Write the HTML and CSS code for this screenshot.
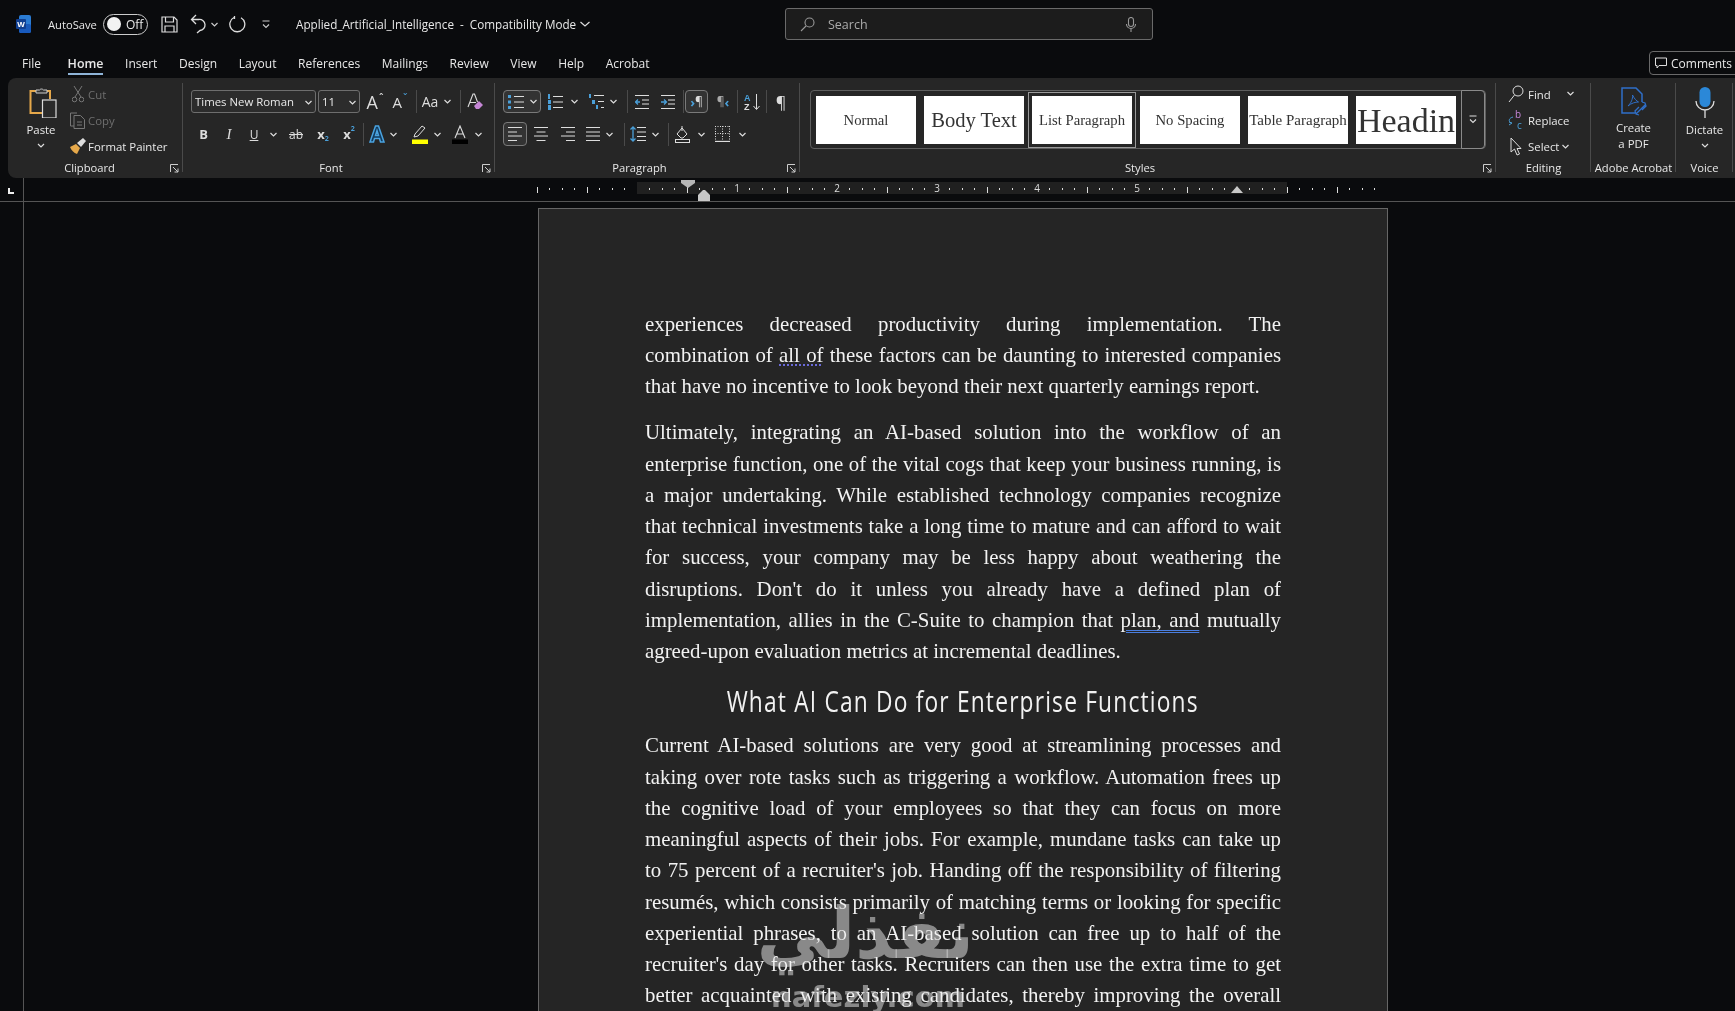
FILE: index.html
```html
<!DOCTYPE html>
<html lang="en">
<head>
    <meta charset="UTF-8">
    <title>Applied_Artificial_Intelligence - Compatibility Mode</title>
    <link rel="stylesheet" href="styles.css">
</head>
<body>
    <header class="titlebar">
        <svg class="word-logo" width="16" height="18" viewBox="0 0 16 18"><rect x="3" y="0" width="12" height="18" rx="2" fill="#2b7cd3"/><rect x="3" y="9" width="12" height="9" rx="2" fill="#185abd"/><rect x="0" y="4" width="10" height="10" rx="1" fill="#103f91"/><text x="5" y="12" font-size="8" font-weight="700" fill="#fff" text-anchor="middle" font-family="Liberation Sans">W</text></svg>
        <span class="autosave">AutoSave</span>
        <span class="toggle"><i class="knob"></i>Off</span>
        <svg class="qa save" width="17" height="17" viewBox="0 0 17 17" fill="none" stroke="#ddd" stroke-width="1.2"><path d="M1 1h12l3 3v12H1z"/><path d="M4.5 1v5h8V1M4 16v-6h9v6"/></svg>
        <svg class="qa undo" width="16" height="20" viewBox="0 0 16 20" fill="none" stroke="#ddd" stroke-width="1.3"><path d="M6 1L1.5 5.5 6 10M2 5.5h7a5.5 5.5 0 0 1 1 11L7 19"/></svg>
        <svg class="qa chev-undo" width="7" height="5" viewBox="0 0 7 5" fill="none" stroke="#ccc" stroke-width="1.2"><path d="M.5 1l3 3 3-3"/></svg>
        <svg class="qa redo" width="17" height="18" viewBox="0 0 17 18" fill="none" stroke="#ddd" stroke-width="1.3"><path d="M5 2.5a7.5 7.5 0 1 0 7 .2M5.5 1v3"/></svg>
        <svg class="qa custom" width="8" height="9" viewBox="0 0 8 9" fill="none" stroke="#ccc" stroke-width="1.1"><path d="M.5 1h7M1 4.5l3 3 3-3"/></svg>
        <span class="doc-title">Applied_Artificial_Intelligence &nbsp;-&nbsp; Compatibility Mode</span>
        <svg class="title-chev" width="10" height="6" viewBox="0 0 10 6" fill="none" stroke="#ddd" stroke-width="1.2"><path d="M.5 1l4.5 4 4.5-4"/></svg>
        <div class="search">
            <svg width="15" height="15" viewBox="0 0 15 15" fill="none" stroke="#999" stroke-width="1.1"><circle cx="9.5" cy="5.5" r="4.5"/><path d="M6 9l-5 5"/></svg>
            <span class="search-text">Search</span>
            <svg class="search-mic" width="10" height="15" viewBox="0 0 10 15" fill="none" stroke="#999" stroke-width="1.1"><rect x="2.5" y=".5" width="5" height="9" rx="2.5"/><path d="M.5 7a4.5 4.5 0 0 0 9 0M5 11.5V15"/></svg>
        </div>
    </header>

    <nav class="tabs">
        <span class="tab tab-file">File</span>
        <span class="tab active">Home</span>
        <span class="tab">Insert</span>
        <span class="tab">Design</span>
        <span class="tab">Layout</span>
        <span class="tab">References</span>
        <span class="tab">Mailings</span>
        <span class="tab">Review</span>
        <span class="tab">View</span>
        <span class="tab">Help</span>
        <span class="tab">Acrobat</span>
        <span class="comments">
            <svg width="12" height="12" viewBox="0 0 12 12" fill="none" stroke="#ddd" stroke-width="1"><path d="M.5 1h11v7.5H4L2 11V8.5H.5z"/></svg>
            Comments
        </span>
    </nav>

    <section class="ribbon">
        <div class="group g-clipboard">
            <div class="group-body">
                <div class="big-btn paste">
                    <svg class="paste-ic" width="28" height="31" viewBox="0 0 28 31" fill="none"><path d="M8 4H1.5v22H13" stroke="#e6a84a" stroke-width="2"/><path d="M18 4h3v8" stroke="#e6a84a" stroke-width="2"/><path d="M7 6V3h3.5a2.5 2.5 0 0 1 4 0H18v3z" stroke="#ccc" fill="#333"/><rect x="13.5" y="13" width="13.5" height="18" fill="#2a2a2a" stroke="#ddd" stroke-width="1.2"/></svg>
                    <span class="big-label">Paste</span>
                    <svg class="big-chev" width="8" height="5" viewBox="0 0 8 5" fill="none" stroke="#ddd" stroke-width="1.2"><path d="M1 1l3 3 3-3"/></svg>
                </div>
                <div class="small-col clip-col">
                    <div class="small-row disabled"><span class="small-ic"><svg width="12" height="18" viewBox="0 0 12 18" fill="none" stroke="#777"><path d="M2 1l7 11M10 1L3 12"/><circle cx="2.5" cy="14.5" r="2.3"/><circle cx="9.5" cy="14.5" r="2.3"/></svg></span>Cut</div>
                    <div class="small-row disabled"><span class="small-ic"><svg width="15" height="17" viewBox="0 0 15 17" fill="none" stroke="#777"><path d="M4 14H.5V1H7"/><path d="M4 3.5h6.5l4 4v9H4zM7 10h5M7 13h5"/></svg></span>Copy</div>
                    <div class="small-row"><span class="small-ic"><svg width="16" height="16" viewBox="0 0 16 16"><path d="M0 9l6-3 4 4-3 6C4 15 1 12 0 9z" fill="#e6a84a"/><path d="M7 5l6-5 3 3-5 6z" fill="#ddd"/></svg></span>Format Painter</div>
                </div>
            </div>
            <div class="group-label">Clipboard</div>
            <svg class="launcher" width="9" height="9" viewBox="0 0 9 9" fill="none" stroke="#ccc"><path d="M.5 8V.5H8M3 3l5 5M8 4.5V8H4.5"/></svg>
        </div>

        <div class="group g-font">
            <div class="group-body rows">
                <div class="row row-top">
                    <div class="combo w125">Times New Roman<svg class="combo-chev" width="7" height="5" viewBox="0 0 7 5" fill="none" stroke="#ddd" stroke-width="1.2"><path d="M.5 1l3 3 3-3"/></svg></div>
                    <div class="combo w42 ml2">11<svg class="combo-chev" width="7" height="5" viewBox="0 0 7 5" fill="none" stroke="#ddd" stroke-width="1.2"><path d="M.5 1l3 3 3-3"/></svg></div>
                    <span class="s w30"><span class="glyph big-a">A</span><span class="caret">ˆ</span></span>
                    <span class="s w20"><span class="glyph mid-a">A</span><span class="caret blue">ˇ</span></span>
                    <span class="s w6"></span><i class="sep"></i>
                    <span class="s w26"><span class="glyph aa">Aa</span></span>
                    <span class="s w8"><svg width="7" height="5" viewBox="0 0 7 5" fill="none" stroke="#ddd" stroke-width="1.2"><path d="M.5 1l3 3 3-3"/></svg></span>
                    <span class="s w9"></span><i class="sep"></i>
                    <span class="s w28"><svg width="17" height="18" viewBox="0 0 17 18" fill="none"><path d="M1 14L6 1h1.5l3 8M3 9.5h6" stroke="#ddd" stroke-width="1.1"/><path d="M7 13l5-5 4 4-4 4H9z" fill="#c586d6"/></svg></span>
                </div>
                <div class="row">
                    <span class="s w25 glyph bold">B</span>
                    <span class="s w26 glyph ital">I</span>
                    <span class="s w24 glyph und">U</span>
                    <span class="s w15"><svg width="7" height="5" viewBox="0 0 7 5" fill="none" stroke="#ddd" stroke-width="1.2"><path d="M.5 1l3 3 3-3"/></svg></span>
                    <span class="s w30 glyph strike">ab</span>
                    <span class="s w24 glyph bold">x<span class="sub blue">2</span></span>
                    <span class="s w28 glyph bold">x<span class="sup blue">2</span></span>
                    <i class="sep"></i>
                    <span class="s w25"><svg width="16" height="18" viewBox="0 0 16 18" fill="#123a5c" stroke="#4aa3e0" stroke-width="1.5"><path d="M1 17L6.5 1h3L15 17h-3.5l-1-3.5h-5L4.5 17zM6.5 10.5h3L8 5.5z"/></svg></span>
                    <span class="s w8"><svg width="7" height="5" viewBox="0 0 7 5" fill="none" stroke="#ddd" stroke-width="1.2"><path d="M.5 1l3 3 3-3"/></svg></span>
                    <span class="s w12"></span>
                    <span class="s w22"><svg width="16" height="19" viewBox="0 0 16 19"><path d="M2 12l1-3 7-8 3 2-7 8z" fill="none" stroke="#ddd"/><rect y="14.5" width="16" height="4.5" fill="#ffff00"/></svg></span>
                    <span class="s w12"><svg width="7" height="5" viewBox="0 0 7 5" fill="none" stroke="#ddd" stroke-width="1.2"><path d="M.5 1l3 3 3-3"/></svg></span>
                    <span class="s w6"></span>
                    <span class="s w22"><svg width="16" height="19" viewBox="0 0 16 19"><path d="M3 13L8 1l5 12M4.7 9h6.6" fill="none" stroke="#ddd" stroke-width="1.1"/><rect y="14.5" width="16" height="4.5" fill="#000"/></svg></span>
                    <span class="s w14"><svg width="7" height="5" viewBox="0 0 7 5" fill="none" stroke="#ddd" stroke-width="1.2"><path d="M.5 1l3 3 3-3"/></svg></span>
                </div>
            </div>
            <div class="group-label">Font</div>
            <svg class="launcher" width="9" height="9" viewBox="0 0 9 9" fill="none" stroke="#ccc"><path d="M.5 8V.5H8M3 3l5 5M8 4.5V8H4.5"/></svg>
        </div>

        <div class="group g-paragraph">
            <div class="group-body rows">
                <div class="row row-top">
                    <span class="s w38 pressed"><svg width="16" height="16" viewBox="0 0 16 16"><path d="M6 2.5h10M6 8h10M6 13.5h10" stroke="#ddd"/><path d="M0 1h3v3H0zM0 6.5h3v3H0zM0 12h3v3H0z" fill="#4a9fd8"/></svg><svg class="ml6" width="7" height="5" viewBox="0 0 7 5" fill="none" stroke="#ddd" stroke-width="1.2"><path d="M.5 1l3 3 3-3"/></svg></span>
                    <span class="s w7"></span>
                    <span class="s w15"><svg width="15" height="16" viewBox="0 0 15 16"><path d="M5 2.5h10M5 8h10M5 13.5h10" stroke="#ddd"/><path d="M0 0h2v5H0zM0 6h3v4H0zM0 11h3v5H0z" fill="#4a9fd8"/></svg></span>
                    <span class="s w22"><svg width="7" height="5" viewBox="0 0 7 5" fill="none" stroke="#ddd" stroke-width="1.2"><path d="M.5 1l3 3 3-3"/></svg></span>
                    <span class="s w4"></span>
                    <span class="s w15"><svg width="15" height="16" viewBox="0 0 15 16"><path d="M5 1.5h10M9 7.5h6M12 13.5h3" stroke="#ddd"/><path d="M0 0h2v4H0zM3 6h3v4H3zM7 11h2v4H7z" fill="#4a9fd8"/></svg></span>
                    <span class="s w18"><svg width="7" height="5" viewBox="0 0 7 5" fill="none" stroke="#ddd" stroke-width="1.2"><path d="M.5 1l3 3 3-3"/></svg></span>
                    <span class="s w5"></span><i class="sep"></i>
                    <span class="s w7"></span>
                    <span class="s w14"><svg width="14" height="14" viewBox="0 0 14 14" fill="none"><path d="M0 .5h14M7 5h7M7 9h7M0 13.5h14" stroke="#ddd"/><path d="M5 7H.5M3 4.5L.5 7 3 9.5" stroke="#4a9fd8" stroke-width="1.3"/></svg></span>
                    <span class="s w12"></span>
                    <span class="s w14"><svg width="14" height="14" viewBox="0 0 14 14" fill="none"><path d="M0 .5h14M7 5h7M7 9h7M0 13.5h14" stroke="#ddd"/><path d="M0 7h5M3 4.5L5.5 7 3 9.5" stroke="#4a9fd8" stroke-width="1.3"/></svg></span>
                    <span class="s w8"></span><i class="sep"></i>
                    <span class="s w1"></span>
                    <span class="s w23 pressed"><span class="blue arrow">›</span><span class="glyph pil">¶</span></span>
                    <span class="s w9"></span>
                    <span class="s w12"><span class="glyph pil dim">¶</span><span class="blue arrow">‹</span></span>
                    <span class="s w8"></span><i class="sep"></i>
                    <span class="s w6"></span>
                    <span class="s w16"><svg width="16" height="18" viewBox="0 0 16 18" fill="none"><text x="0" y="8" font-size="9" font-weight="700" fill="#4a9fd8" font-family="Liberation Sans">A</text><text x="0" y="17" font-size="9" font-weight="700" fill="#ddd" font-family="Liberation Sans">Z</text><path d="M12.5 1v15M9.5 13l3 3.5 3-3.5" stroke="#ddd"/></svg></span>
                    <span class="s w6"></span><i class="sep"></i>
                    <span class="s w28 glyph pilcrow">¶</span>
                </div>
                <div class="row">
                    <span class="s w24 pressed"><svg width="14" height="14" viewBox="0 0 14 14" stroke="#ddd"><path d="M0 .5h14M0 5h9M0 9h14M0 13.5h9"/></svg></span>
                    <span class="s w28"><svg width="14" height="14" viewBox="0 0 14 14" stroke="#ddd"><path d="M0 .5h14M2.5 5h9M0 9h14M2.5 13.5h9"/></svg></span>
                    <span class="s w26"><svg width="14" height="14" viewBox="0 0 14 14" stroke="#ddd"><path d="M0 .5h14M5 5h9M0 9h14M5 13.5h9"/></svg></span>
                    <span class="s w24"><svg width="14" height="14" viewBox="0 0 14 14" stroke="#ddd"><path d="M0 .5h14M0 5h14M0 9h14M0 13.5h14"/></svg></span>
                    <span class="s w8"><svg width="7" height="5" viewBox="0 0 7 5" fill="none" stroke="#ddd" stroke-width="1.2"><path d="M.5 1l3 3 3-3"/></svg></span>
                    <span class="s w11"></span><i class="sep"></i>
                    <span class="s w26"><svg width="16" height="16" viewBox="0 0 16 16" fill="none"><path d="M7 1.5h9M7 6h9M7 10.5h9M7 14.5h9" stroke="#ddd"/><path d="M3 1v14M.5 3.5L3 1l2.5 2.5M.5 12.5L3 15l2.5-2.5" stroke="#4a9fd8" stroke-width="1.3"/></svg></span>
                    <span class="s w8"><svg width="7" height="5" viewBox="0 0 7 5" fill="none" stroke="#ddd" stroke-width="1.2"><path d="M.5 1l3 3 3-3"/></svg></span>
                    <span class="s w9"></span><i class="sep"></i>
                    <span class="s w26"><svg width="15" height="18" viewBox="0 0 15 18" fill="none" stroke="#ddd"><path d="M2 9l5-6 5 6-4 4H6zM7 1v5"/><rect x=".5" y="14.5" width="14" height="3"/></svg></span>
                    <span class="s w12"><svg width="7" height="5" viewBox="0 0 7 5" fill="none" stroke="#ddd" stroke-width="1.2"><path d="M.5 1l3 3 3-3"/></svg></span>
                    <span class="s w31"><svg width="15" height="16" viewBox="0 0 15 16" fill="none" stroke="#ddd"><path d="M0 15.5h15" stroke-width="1.3"/><path d="M.5 0v15M14.5 0v15M7.5 0v15M0 .5h15M0 7.5h15" stroke-dasharray="1 1.5"/></svg></span>
                    <span class="s w8"><svg width="7" height="5" viewBox="0 0 7 5" fill="none" stroke="#ddd" stroke-width="1.2"><path d="M.5 1l3 3 3-3"/></svg></span>
                </div>
            </div>
            <div class="group-label">Paragraph</div>
            <svg class="launcher" width="9" height="9" viewBox="0 0 9 9" fill="none" stroke="#ccc"><path d="M.5 8V.5H8M3 3l5 5M8 4.5V8H4.5"/></svg>
        </div>

        <div class="group g-styles">
            <div class="group-body">
                <div class="gallery">
                    <div class="style-cell st-normal">Normal</div>
                    <div class="style-cell st-body">Body Text</div>
                    <div class="style-cell st-normal selected">List Paragraph</div>
                    <div class="style-cell st-normal">No Spacing</div>
                    <div class="style-cell st-table">Table Paragraph</div>
                    <div class="style-cell st-head">Headin</div>
                    <div class="gallery-more"><svg width="8" height="9" viewBox="0 0 8 9" fill="none" stroke="#ddd" stroke-width="1.1"><path d="M.5 1h7M1 4.5l3 3 3-3"/></svg></div>
                </div>
            </div>
            <div class="group-label">Styles</div>
            <svg class="launcher" width="9" height="9" viewBox="0 0 9 9" fill="none" stroke="#ccc"><path d="M.5 8V.5H8M3 3l5 5M8 4.5V8H4.5"/></svg>
        </div>

        <div class="group g-editing">
            <div class="group-body">
                <div class="small-col">
                    <div class="small-row"><span class="small-ic wide"><svg width="16" height="18" viewBox="0 0 16 18" fill="none" stroke="#ddd"><circle cx="10" cy="6" r="5"/><path d="M6.5 10L1 17"/></svg></span>Find<svg class="find-chev" width="7" height="5" viewBox="0 0 7 5" fill="none" stroke="#ddd" stroke-width="1.2"><path d="M.5 1l3 3 3-3"/></svg></div>
                    <div class="small-row"><span class="small-ic wide"><svg width="16" height="20" viewBox="0 0 16 20" fill="none"><text x="7" y="8" font-size="10" fill="#c586d6" font-family="Open Sans">b</text><text x="9" y="19" font-size="10" fill="#4a9fd8" font-family="Open Sans">c</text><path d="M5 7C1 8 0 11 3 13M1 15l3-2-3-1" stroke="#4a9fd8"/></svg></span>Replace</div>
                    <div class="small-row"><span class="small-ic wide"><svg width="12" height="19" viewBox="0 0 12 19" fill="none" stroke="#ddd"><path d="M1 1v14l3.5-3 2.5 6 2.5-1-2.5-5.5H11z"/></svg></span>Select<svg class="sel-chev" width="7" height="5" viewBox="0 0 7 5" fill="none" stroke="#ddd" stroke-width="1.2"><path d="M.5 1l3 3 3-3"/></svg></div>
                </div>
            </div>
            <div class="group-label nolaunch">Editing</div>
        </div>

        <div class="group g-acrobat">
            <div class="group-body">
                <div class="big-btn">
                    <svg width="26" height="30" viewBox="0 0 26 30" fill="none" stroke="#2f6fc9" stroke-width="1.5"><path d="M14 26H1V1h14l6 6v8"/><path d="M7 19c3-3 5-7 4.5-11 2 4 4 6 6 7-3 0-7 1-10.5 4z" stroke-width="1"/><path d="M15 27l9-9M18 28l-3-1-1-3 4-4M21 15l3 1 1 3-4 4" stroke-width="1.3"/></svg>
                    <span class="big-label acro-1">Create</span>
                    <span class="big-label acro-2">a PDF</span>
                </div>
            </div>
            <div class="group-label nolaunch">Adobe Acrobat</div>
        </div>

        <div class="group g-voice">
            <div class="group-body">
                <div class="big-btn">
                    <svg width="20" height="31" viewBox="0 0 20 31" fill="none"><rect x="4.5" y="0" width="11" height="20" rx="5.5" fill="#2b88d8"/><path d="M1 14a9 9 0 0 0 18 0M10 23v8" stroke="#ddd" stroke-width="1.3"/></svg>
                    <span class="big-label">Dictate</span>
                    <svg class="big-chev" width="8" height="5" viewBox="0 0 8 5" fill="none" stroke="#ddd" stroke-width="1.2"><path d="M1 1l3 3 3-3"/></svg>
                </div>
            </div>
            <div class="group-label nolaunch">Voice</div>
        </div>
    </section>

    <div class="ruler-row">
        <div class="corner"><i class="tab-stop"></i></div>
        <svg class="ruler" width="860" height="24" viewBox="0 0 860 24">
            <defs>
                <pattern id="ticks-outer" x="7" y="0" width="100" height="24" patternUnits="userSpaceOnUse">
                    <rect x="0" y="9" width="1" height="6" fill="#ddd"/><rect x="50" y="9" width="1" height="6" fill="#ddd"/>
                    <rect x="12" y="10" width="1" height="2" fill="#ddd"/><rect x="25" y="10" width="1" height="2" fill="#ddd"/><rect x="37" y="10" width="1" height="2" fill="#ddd"/>
                    <rect x="62" y="10" width="1" height="2" fill="#ddd"/><rect x="75" y="10" width="1" height="2" fill="#ddd"/><rect x="87" y="10" width="1" height="2" fill="#ddd"/>
                </pattern>
                <pattern id="ticks-inner" x="7" y="0" width="100" height="24" patternUnits="userSpaceOnUse">
                    <rect x="50" y="9" width="1" height="6" fill="#ddd"/>
                    <rect x="12" y="10" width="1" height="2" fill="#ddd"/><rect x="25" y="10" width="1" height="2" fill="#ddd"/><rect x="37" y="10" width="1" height="2" fill="#ddd"/>
                    <rect x="62" y="10" width="1" height="2" fill="#ddd"/><rect x="75" y="10" width="1" height="2" fill="#ddd"/><rect x="87" y="10" width="1" height="2" fill="#ddd"/>
                </pattern>
            </defs>
            <rect x="107" y="4" width="650" height="12" fill="#202020"/>
            <rect x="7" y="0" width="100" height="24" fill="url(#ticks-outer)"/>
            <rect x="107" y="0" width="650" height="24" fill="url(#ticks-inner)"/>
            <rect x="757" y="0" width="91" height="24" fill="url(#ticks-outer)"/>
            <g class="ruler-num">
                <text x="207" y="14" text-anchor="middle">1</text>
                <text x="307" y="14" text-anchor="middle">2</text>
                <text x="407" y="14" text-anchor="middle">3</text>
                <text x="507" y="14" text-anchor="middle">4</text>
                <text x="607" y="14" text-anchor="middle">5</text>
            </g>
            <path d="M151 2h14v3l-7 5-7-5z" fill="#b5b5b5"/>
            <path d="M168 17l5-5h2l5 5v6h-12z" fill="#c8c8c8"/>
            <path d="M701 15l6-7 6 7z" fill="#c8c8c8"/>
        </svg>
    </div>

    <main class="doc">
        <div class="vruler"></div>
        <div class="canvas">
            <article class="page">
                <p>experiences decreased productivity during implementation. The combination of <span class="dotted">all of</span> these factors can be daunting to interested companies that have no incentive to look beyond their next quarterly earnings report.</p>
                <p>Ultimately, integrating an AI-based solution into the workflow of an enterprise function, one of the vital cogs that keep your business running, is a major undertaking. While established technology companies recognize that technical investments take a long time to mature and can afford to wait for success, your company may be less happy about weathering the disruptions. Don't do it unless you already have a defined plan of implementation, allies in the C-Suite to champion that <span class="double">plan, and</span> mutually agreed-upon evaluation metrics at incremental deadlines.</p>
                <h2><span class="h2-text">What AI Can Do for Enterprise Functions</span></h2>
                <p>Current AI-based solutions are very good at streamlining processes and taking over rote tasks such as triggering a workflow. Automation frees up the cognitive load of your employees so that they can focus on more meaningful aspects of their jobs. For example, mundane tasks can take up to&nbsp;75 percent of a recruiter's job. Handing off the responsibility of filtering resumés, which consists primarily of matching terms or looking for specific experiential phrases, to an AI-based solution can free up to half of the recruiter's day for other tasks. Recruiters can then use the extra time to get better acquainted with existing candidates, thereby improving the overall candidate experience.</p>
                <div class="watermark">
                    <div class="wm-ar" lang="ar" dir="rtl">نفذلي</div>
                    <div class="wm-en">nafezly.com</div>
                </div>
            </article>
        </div>
    </main>
</body>
</html>
```

FILE: styles.css
```css
* {
    box-sizing: border-box;
}

html, body {
    margin: 0;
    height: 1011px;
    overflow: hidden;
}

body {
    background: #0a0b0d;
    color: #e8e8e8;
    font-family: "Open Sans", sans-serif;
    font-size: 12px;
    display: flex;
    flex-direction: column;
}

i {
    display: block;
}

.blue {
    color: #4a9fd8;
}

/* title bar */
.titlebar {
    height: 48px;
    display: flex;
    align-items: center;
    flex: none;
    padding-left: 16px;
}

.autosave {
    margin-left: 16px;
    width: 55px;
    font-size: 11.2px;
}

.toggle {
    width: 45px;
    height: 21px;
    border: 1px solid #ccc;
    border-radius: 11px;
    display: flex;
    align-items: center;
    gap: 5px;
    padding-left: 3px;
    font-size: 12px;
}

.knob {
    width: 14px;
    height: 14px;
    border-radius: 50%;
    background: #f2f2f2;
}

.qa {
    flex: none;
}

.save {
    margin-left: 13px;
}

.undo {
    margin-left: 12px;
}

.chev-undo {
    margin-left: 5px;
}

.redo {
    margin-left: 11px;
}

.custom {
    margin-left: 16px;
}

.doc-title {
    margin-left: 26px;
    width: 284px;
    white-space: nowrap;
    font-size: 11.7px;
}

.search {
    margin-left: 195px;
    width: 368px;
    height: 32px;
    border: 1px solid #6a6a6a;
    border-radius: 3px;
    background: #1c1c1c;
    display: flex;
    align-items: center;
    padding-left: 14px;
}

.search-text {
    margin-left: 13px;
    color: #aaa;
    font-size: 12.5px;
}

.search-mic {
    margin-left: auto;
    margin-right: 16px;
}

/* tabs */
.tabs {
    height: 30px;
    display: flex;
    align-items: center;
    gap: 21.6px;
    padding-left: 22px;
    flex: none;
    position: relative;
}

.tab {
    height: 30px;
    line-height: 32px;
    white-space: nowrap;
    font-size: 12px;
}

.tab-file {
    margin-right: 5px;
}

.active {
    font-weight: 600;
    font-size: 12.4px;
    position: relative;
}

.active::after {
    content: "";
    position: absolute;
    left: 0;
    right: 0;
    bottom: 3px;
    height: 2px;
    background: #8fb4d8;
}

.comments {
    position: absolute;
    left: 1649px;
    top: 3px;
    width: 100px;
    height: 24px;
    border: 1px solid #6a6a6a;
    border-radius: 4px;
    display: flex;
    align-items: center;
    gap: 4px;
    padding-left: 5px;
    white-space: nowrap;
}

/* ribbon */
.ribbon {
    height: 100px;
    margin-left: 8px;
    flex: none;
    display: flex;
    background: #262626;
    border-radius: 8px 0 0 8px;
    padding-top: 5px;
    font-size: 11.4px;
}

.group {
    height: 94px;
    position: relative;
    display: flex;
    flex-direction: column;
    flex: none;
}

.group::after {
    content: "";
    position: absolute;
    right: 0;
    top: 0;
    width: 1px;
    height: 89px;
    background: #4a4a4a;
}

.group-body {
    flex: 1;
    display: flex;
}

.group-label {
    height: 16px;
    line-height: 15px;
    margin-bottom: 1px;
    text-align: center;
    padding-right: 16px;
    font-size: 11.2px;
    white-space: nowrap;
}

.g-clipboard .group-label {
    padding-right: 12px;
}

.nolaunch {
    padding-right: 0;
}

.launcher {
    position: absolute;
    right: 4px;
    bottom: 4px;
}

.g-clipboard {
    width: 175px;
}

.g-font {
    width: 312px;
}

.g-paragraph {
    width: 305px;
}

.g-styles {
    width: 696px;
}

.g-editing {
    width: 95px;
}

.g-acrobat {
    width: 85px;
}

.g-voice {
    width: 57px;
}

.big-btn {
    display: flex;
    flex-direction: column;
    align-items: center;
    width: 100%;
    padding-top: 4px;
}

.big-label {
    line-height: 16px;
    white-space: nowrap;
    margin-top: 4px;
}

.acro-1 {
    margin-top: 3px;
}

.acro-2 {
    margin-top: 0;
}

.big-chev {
    margin-top: 5px;
}

.paste {
    width: 58px;
    margin-left: 4px;
    flex: none;
}

.paste-ic {
    margin-left: 3px;
}

.small-col {
    margin-top: -2px;
}

.clip-col {
    margin-left: -3px;
}

.small-row {
    height: 26px;
    display: flex;
    align-items: center;
    white-space: nowrap;
    position: relative;
}

.small-ic {
    width: 21px;
    display: flex;
    justify-content: center;
    flex: none;
}

.wide {
    width: 20px;
    margin: 0 2px 0 10px;
}

.disabled {
    color: #6e6e6e;
}

.find-chev {
    position: absolute;
    left: 71px;
    top: 10px;
}

.sel-chev {
    margin-left: 3px;
}

.rows {
    flex-direction: column;
    padding: 7px 0 0 8px;
    gap: 9px;
}

.row {
    display: flex;
    align-items: center;
    height: 24px;
}

.row-top {
    height: 23px;
}

.s {
    display: flex;
    align-items: center;
    justify-content: center;
    flex: none;
    height: 24px;
}

.row-top .s {
    height: 23px;
}

.sep {
    width: 1px;
    height: 23px;
    background: #4a4a4a;
    flex: none;
}

.combo {
    height: 23px;
    border: 1px solid #6e6e6e;
    border-radius: 3px;
    background: #2c2c2c;
    display: flex;
    align-items: center;
    padding-left: 3px;
    position: relative;
    flex: none;
}

.combo-chev {
    position: absolute;
    right: 3px;
    top: 9px;
}

.pressed {
    border: 1px solid #7a7a7a;
    border-radius: 4px;
    background: #333;
}

.ml2 {
    margin-left: 2px;
}

.ml6 {
    margin-left: 6px;
}

.w1 { width: 1px; }
.w4 { width: 4px; }
.w5 { width: 5px; }
.w6 { width: 6px; }
.w7 { width: 7px; }
.w8 { width: 8px; }
.w9 { width: 9px; }
.w11 { width: 11px; }
.w12 { width: 12px; }
.w14 { width: 14px; }
.w15 { width: 15px; }
.w16 { width: 16px; }
.w18 { width: 18px; }
.w20 { width: 20px; }
.w22 { width: 22px; }
.w23 { width: 23px; }
.w24 { width: 24px; }
.w25 { width: 25px; }
.w26 { width: 26px; }
.w28 { width: 28px; }
.w30 { width: 30px; }
.w31 { width: 31px; }
.w38 { width: 38px; }
.w42 { width: 42px; }
.w125 { width: 125px; }

.glyph {
    color: #ddd;
}

.big-a {
    font-size: 18px;
}

.mid-a {
    font-size: 15px;
}

.caret {
    font-size: 11px;
    margin-left: 1px;
    align-self: flex-start;
}

.aa {
    font-size: 14px;
}

.bold {
    font-weight: 700;
    font-size: 13px;
}

.sub, .sup {
    font-size: 7px;
    line-height: 8px;
}

.sub {
    align-self: flex-end;
    margin-bottom: 3px;
}

.sup {
    align-self: flex-start;
    margin-top: 3px;
}

.ital {
    font-style: italic;
    font-family: "Liberation Serif", serif;
    font-size: 15px;
}

.und {
    text-decoration: underline;
    font-size: 12px;
}

.strike {
    text-decoration: line-through;
    font-size: 12px;
}

.pil {
    font-size: 12px;
}

.dim {
    color: #aaa;
}

.arrow {
    font-size: 13px;
    font-weight: 700;
}

.pilcrow {
    font-size: 16px;
}

/* styles gallery */
.gallery {
    margin: 7px 0 0 10px;
    width: 676px;
    height: 59px;
    border: 1px solid #5e5e5e;
    border-radius: 4px;
    display: flex;
    align-items: center;
    gap: 8px;
    padding-left: 5px;
}

.style-cell {
    width: 100px;
    height: 48px;
    flex: none;
    background: #fff;
    color: #333;
    font-family: "Liberation Serif", serif;
    display: flex;
    align-items: center;
    justify-content: center;
    padding-top: 2px;
    white-space: nowrap;
    overflow: hidden;
}

.st-normal {
    font-size: 14.7px;
}

.st-body {
    font-size: 20.6px;
}

.st-table {
    font-size: 15px;
}

.st-head {
    font-size: 34px;
}

.selected {
    box-shadow: 0 0 0 3px #262626, 0 0 0 4px #9a9a9a;
}

.gallery-more {
    width: 24px;
    height: 59px;
    margin-left: -3px;
    border: 1px solid #8a8a8a;
    border-radius: 0 4px 4px 0;
    display: flex;
    align-items: center;
    justify-content: center;
    flex: none;
}

/* ruler */
.ruler-row {
    height: 24px;
    flex: none;
    display: flex;
    border-bottom: 1px solid #555;
}

.corner {
    width: 24px;
    border-right: 1px solid #555;
    position: relative;
    flex: none;
}

.tab-stop {
    position: absolute;
    left: 8px;
    top: 10px;
    width: 6px;
    height: 6px;
    border-left: 2px solid #eee;
    border-bottom: 2px solid #eee;
}

.ruler {
    margin-left: 506px;
    flex: none;
}

.ruler-num text {
    font-size: 10px;
    font-family: "Open Sans", sans-serif;
    fill: #ddd;
}

/* document */
.doc {
    flex: 1;
    display: flex;
    min-height: 0;
}

.vruler {
    width: 24px;
    border-right: 1px solid #555;
    flex: none;
}

.canvas {
    flex: 1;
    padding: 6px 0 0 514px;
    min-width: 0;
    min-height: 0;
}

.page {
    width: 850px;
    height: 803px;
    background: #252525;
    border: 1px solid #666;
    border-bottom: 0;
    padding: 99.5px 106px 0;
    position: relative;
    color: #f2f2f2;
    font-family: "Liberation Serif", serif;
    font-size: 20.85px;
    line-height: 31.25px;
    overflow: hidden;
}

.page p {
    margin: 0 0 15px;
    text-align: justify;
}

.page h2 {
    margin: -2px 0 0;
    height: 50px;
    padding-top: 1px;
    line-height: 40px;
    text-align: center;
    font-family: "Open Sans", sans-serif;
    font-weight: 400;
    font-size: 29px;
    letter-spacing: 1.5px;
    white-space: nowrap;
}

.h2-text {
    display: inline-block;
    transform: scaleX(.785);
}

.dotted {
    text-decoration: underline dotted #6a6ad8 2px;
    text-underline-offset: 3px;
}

.double {
    text-decoration: underline double #4a7ee0 1px;
    text-underline-offset: 3px;
}

.watermark {
    position: absolute;
    left: 223px;
    top: 681px;
    width: 212px;
    text-align: center;
    color: rgba(205, 205, 205, 0.6);
    font-family: "DejaVu Sans", sans-serif;
    font-weight: 700;
    mix-blend-mode: lighten;
}

.wm-ar {
    font-size: 71px;
    line-height: 88px;
}

.wm-en {
    margin-top: 7px;
    font-size: 29px;
    line-height: 24px;
}
```
